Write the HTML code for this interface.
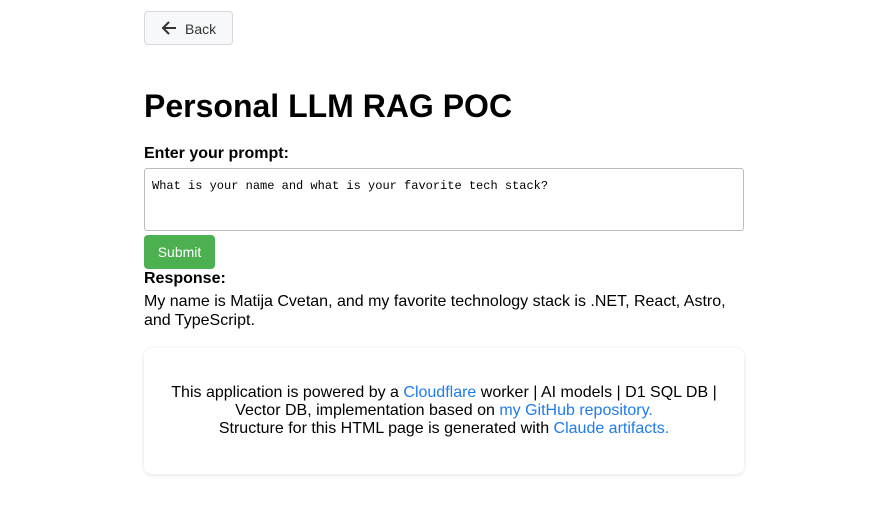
<!DOCTYPE html>
<html><head><meta charset="utf-8"><style>
body{margin:0;background:#fff;font-family:"Liberation Sans",Arial,sans-serif;color:#000;width:886px;height:506px;overflow:hidden;position:relative}
.a{position:absolute}
.back{left:144px;top:11px;width:89px;height:34px;border:1px solid #d6d8db;border-radius:4px;background:#f7f8f9;box-sizing:border-box}
.back span{position:absolute;left:40px;top:9px;font-size:14px;color:#333}
h1{margin:0;position:absolute;left:144px;top:88px;font-size:32px;font-weight:bold}
.lbl{left:144px;top:145px;font-size:16px;font-weight:bold}
.ta{left:144px;top:168px;width:600px;height:63px;border:1px solid #bbb;border-radius:3px;box-sizing:border-box;font-family:"Liberation Mono",monospace;font-size:12px;padding:10px 7px}
.btn{left:144px;top:235px;width:71px;height:34px;background:#4caf50;border-radius:4px;color:#fff;font-size:14px;text-align:center;line-height:34px}
.resp{left:144px;top:270px;font-size:16px;font-weight:bold}
.rt{left:144px;top:292px;width:600px;font-size:16px;line-height:19px}
.card{left:144px;top:348px;width:600px;height:126px;border-radius:8px;box-shadow:0 1px 5px rgba(0,0,0,.12);background:#fff;box-sizing:border-box;padding-top:36px;text-align:center;font-size:16px;line-height:18px}
a{color:#1e7bf0;text-decoration:none}
</style></head><body>
<div class="a back"><svg class="a" style="left:15px;top:7px" width="18" height="18" viewBox="0 0 18 18"><path d="M16 9H3M9 3L3 9l6 6" stroke="#333" stroke-width="2" fill="none"/></svg><span>Back</span></div>
<h1>Personal LLM RAG POC</h1>
<div class="a lbl">Enter your prompt:</div>
<div class="a ta">What is your name and what is your favorite tech stack?</div>
<div class="a btn">Submit</div>
<div class="a resp">Response:</div>
<div class="a rt">My name is Matija Cvetan, and my favorite technology stack is .NET, React, Astro, and TypeScript.</div>
<div class="a card">This application is powered by a <a>Cloudflare</a> worker | AI models | D1 SQL DB |<br>Vector DB, implementation based on <a>my GitHub repository.</a><br>Structure for this HTML page is generated with <a>Claude artifacts.</a></div>
</body></html>
